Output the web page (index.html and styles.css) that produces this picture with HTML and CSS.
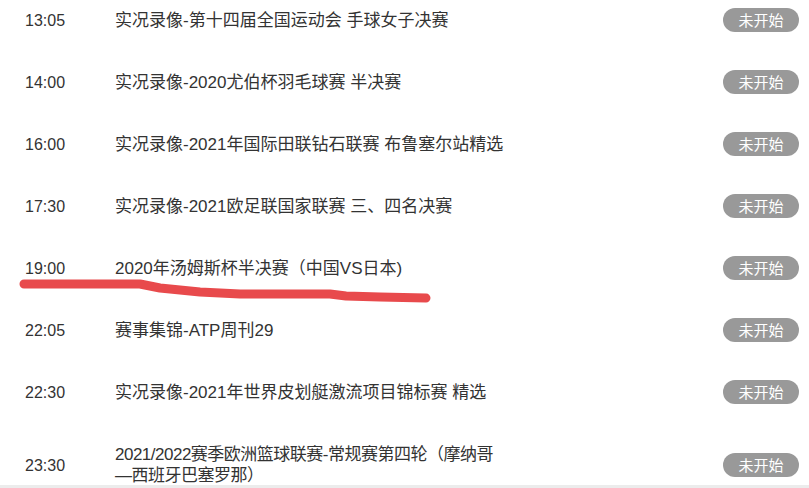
FILE: index.html
```html
<!DOCTYPE html>
<html lang="zh-CN">
<head>
<meta charset="utf-8">
<title>节目单</title>
<link rel="stylesheet" href="styles.css">
</head>
<body>
<div class="list">
  <div class="row"><span class="time">13:05</span><span class="title">实况录像-第十四届全国运动会 手球女子决赛</span><span class="status">未开始</span></div>
  <div class="row"><span class="time">14:00</span><span class="title">实况录像-2020尤伯杯羽毛球赛 半决赛</span><span class="status">未开始</span></div>
  <div class="row"><span class="time">16:00</span><span class="title">实况录像-2021年国际田联钻石联赛 布鲁塞尔站精选</span><span class="status">未开始</span></div>
  <div class="row"><span class="time">17:30</span><span class="title">实况录像-2021欧足联国家联赛 三、四名决赛</span><span class="status">未开始</span></div>
  <div class="row"><span class="time">19:00</span><span class="title">2020年汤姆斯杯半决赛（中国VS日本)</span><span class="status">未开始</span></div>
  <div class="row"><span class="time">22:05</span><span class="title">赛事集锦-ATP周刊29</span><span class="status">未开始</span></div>
  <div class="row"><span class="time">22:30</span><span class="title">实况录像-2021年世界皮划艇激流项目锦标赛 精选</span><span class="status">未开始</span></div>
  <div class="row row-tall"><span class="time">23:30</span><span class="title title-tight">2021/2022赛季欧洲篮球联赛-常规赛第四轮（摩纳哥<br>—西班牙巴塞罗那）</span><span class="status">未开始</span></div>
</div>
<svg class="scribble" width="809" height="488" viewBox="0 0 809 488">
  <polyline points="24,284 140,284 160,288 200,292 240,294 330,294 346,296 380,297 426,298" fill="none" stroke="#e84a4c" stroke-width="9" stroke-linecap="round" stroke-linejoin="round"/>
</svg>
<div class="bottom-line"></div>
</body>
</html>
```
FILE: styles.css
```css
html, body {
  margin: 0;
  padding: 0;
  background: #ffffff;
  overflow: hidden;
}
body {
  width: 809px;
  height: 488px;
  position: relative;
  font-family: "Liberation Sans", "Noto Sans CJK SC", sans-serif;
  color: #333333;
}
.list {
  margin-top: -11px;
  display: flex;
  flex-direction: column;
}
.row {
  display: flex;
  align-items: center;
  height: 62px;
  padding: 0 10px 0 25px;
  overflow: hidden;
}
.row-tall {
  height: 84px;
}
.time {
  width: 90px;
  flex: none;
  font-size: 16px;
  line-height: 21px;
}
.title {
  flex: 1;
  font-size: 17px;
  line-height: 21px;
  max-width: 400px;
}
.title-tight {
  letter-spacing: -0.5px;
}
.status {
  margin-left: auto;
  flex: none;
  width: 76px;
  height: 24px;
  border-radius: 12px;
  background: #999999;
  color: #ffffff;
  font-size: 15px;
  line-height: 24px;
  text-align: center;
  font-family: "Noto Sans CJK SC", sans-serif;
}
.scribble {
  position: absolute;
  left: 0;
  top: 0;
  pointer-events: none;
}
.bottom-line {
  position: absolute;
  left: 0;
  right: 0;
  bottom: 0;
  height: 3px;
  background: #ececec;
}
```
